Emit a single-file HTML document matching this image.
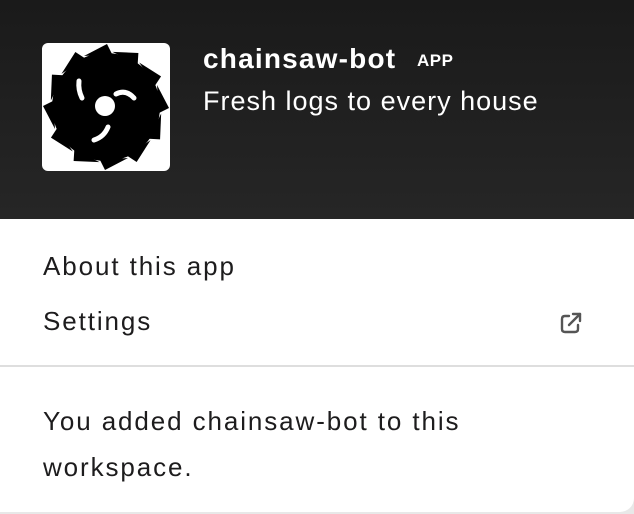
<!DOCTYPE html>
<html><head><style>
html,body{margin:0;padding:0;width:634px;height:514px;background:#e8e8e8;overflow:hidden;font-family:"Liberation Sans",sans-serif;}
.card{position:absolute;left:0;top:0;width:634px;height:512px;background:#fff;border-bottom-right-radius:14px;overflow:hidden;}
.hdr{position:absolute;left:0;top:0;width:634px;height:219px;background:linear-gradient(180deg,#1a1a1a,#262626);}
.logo{position:absolute;left:42px;top:43px;width:128px;height:128px;background:#fff;border-radius:6px;overflow:hidden;}
.t1{position:absolute;left:203px;top:43px;color:#fff;font-weight:bold;font-size:28px;letter-spacing:1.2px;}
.app{position:absolute;left:417px;top:51px;color:#fff;font-size:17px;font-weight:bold;letter-spacing:0.5px;}
.t2{position:absolute;left:203px;top:86px;color:#fff;font-size:27px;letter-spacing:1px;}
.it{position:absolute;left:43px;color:#1d1c1d;font-size:26px;letter-spacing:1.9px;}
.div{position:absolute;left:0;top:365px;width:634px;height:2px;background:#dedede;}
</style></head><body>
<div class="card">
<div class="hdr">
<div class="logo">
<svg width="128" height="128" viewBox="-64 -64 128 128">
<circle r="54" fill="#000"/>
<g fill="#000">
<polygon points="-22,-51 1,-63 6,-53" transform="rotate(0)"/>
<polygon points="-22,-51 1,-63 6,-53" transform="rotate(30)"/>
<polygon points="-22,-51 1,-63 6,-53" transform="rotate(60)"/>
<polygon points="-22,-51 1,-63 6,-53" transform="rotate(90)"/>
<polygon points="-22,-51 1,-63 6,-53" transform="rotate(120)"/>
<polygon points="-22,-51 1,-63 6,-53" transform="rotate(150)"/>
<polygon points="-22,-51 1,-63 6,-53" transform="rotate(180)"/>
<polygon points="-22,-51 1,-63 6,-53" transform="rotate(210)"/>
<polygon points="-22,-51 1,-63 6,-53" transform="rotate(240)"/>
<polygon points="-22,-51 1,-63 6,-53" transform="rotate(270)"/>
<polygon points="-22,-51 1,-63 6,-53" transform="rotate(300)"/>
<polygon points="-22,-51 1,-63 6,-53" transform="rotate(330)"/>
</g>
<circle cx="-1" cy="-1" r="10" fill="#fff"/>
<g stroke="#fff" stroke-width="5" stroke-linecap="round" fill="none">
<path d="M-27,-26 Q-28,-17 -24,-9"/>
<path d="M10,-13 Q20,-18 28,-9"/>
<path d="M2,20 Q-2,30 -12,33"/>
</g>
</svg>
</div>
<div class="t1">chainsaw-bot</div>
<div class="app">APP</div>
<div class="t2">Fresh logs to every house</div>
</div>
<div class="it" style="top:251px">About this app</div>
<div class="it" style="top:306px">Settings</div>
<svg style="position:absolute;left:558px;top:311px" width="26" height="26" viewBox="0 0 26 26" fill="none" stroke="#555" stroke-width="2.4" stroke-linecap="round" stroke-linejoin="round">
<path d="M11,5 H7 Q4,5 4,8 V18 Q4,21 7,21 H17 Q20,21 20,18 V14"/>
<path d="M11,14 L22,3"/><path d="M15,3 H22 V10"/>
</svg>
<div class="div"></div>
<div class="it" style="top:398px;line-height:46px">You added chainsaw-bot to this<br>workspace.</div>
</div>
</body></html>
